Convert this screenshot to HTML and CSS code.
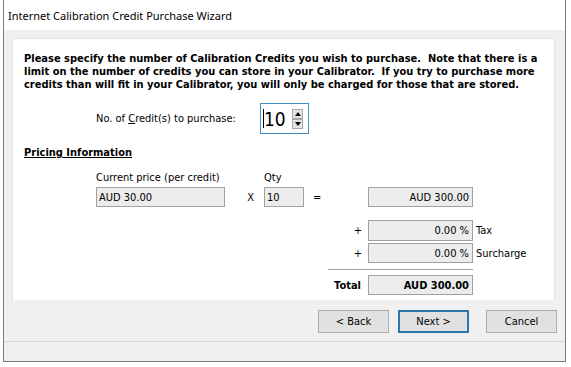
FILE: index.html
```html
<!DOCTYPE html>
<html>
<head>
    <title>Internet Calibration Credit Purchase Wizard</title>
    <link rel="stylesheet" href="styles.css">
</head>
<body>
    <div class="window">
        <div class="titlebar">Internet Calibration Credit Purchase Wizard</div>
        <div class="client">
            <div class="panel">
                <p class="intro">
                    Please specify the number of Calibration Credits you wish to purchase.&nbsp; Note that there is a<br>
                    limit on the number of credits you can store in your Calibrator.&nbsp; If you try to purchase more<br>
                    credits than will fit in your Calibrator, you will only be charged for those that are stored.
                </p>

                <div class="credits-row">
                    <label class="credits-label" for="credits">No. of <u>C</u>redit(s) to purchase:</label>
                    <div class="spinner">
                        <div class="spinner-value"><span class="caret"></span>10</div>
                        <div class="spinner-buttons">
                            <div class="spin-btn"><span class="tri-up"></span></div>
                            <div class="spin-btn"><span class="tri-down"></span></div>
                        </div>
                    </div>
                </div>

                <div class="section-title">Pricing Information</div>

                <div class="pricing">
                    <div class="cell-label c1 r1">Current price (per credit)</div>
                    <div class="cell-label c3 r1">Qty</div>

                    <div class="field c1 r2">AUD 30.00</div>
                    <div class="op op-x c2 r2">X</div>
                    <div class="field c3 r2">10</div>
                    <div class="op op-eq c4 r2">=</div>
                    <div class="field right c5 r2">AUD 300.00</div>

                    <div class="op op-plus c4 r4">+</div>
                    <div class="field right c5 r4">0.00 %</div>
                    <div class="side c6 r4">Tax</div>

                    <div class="op op-plus c4 r6">+</div>
                    <div class="field right c5 r6">0.00 %</div>
                    <div class="side c6 r6">Surcharge</div>

                    <div class="rule r7"></div>

                    <div class="op op-total c4 r8">Total</div>
                    <div class="field right bold c5 r8">AUD 300.00</div>
                </div>
            </div>

            <div class="footer">
                <button class="btn">&lt; Back</button>
                <button class="btn btn-default">Next &gt;</button>
                <button class="btn btn-cancel">Cancel</button>
            </div>
            <div class="statusgap"></div>
        </div>
    </div>
</body>
</html>
```

FILE: styles.css
```css
body {
    margin: 0;
    background-color: #fff;
    font-family: "DejaVu Sans Condensed", "DejaVu Sans", sans-serif;
    font-size: 11px;
    color: #000;
}

.window {
    margin-left: 3px;
    width: 561px;
    border-left: 1px solid #7a7a7a;
    border-right: 1px solid #7a7a7a;
    border-bottom: 1px solid #7a7a7a;
}

.titlebar {
    height: 30px;
    line-height: 31px;
    padding-left: 4px;
    background-color: #fff;
    font-family: "Noto Sans", sans-serif;
    font-size: 11px;
}

.client {
    background-color: #f0f0f0;
    padding-top: 8px;
}

.panel {
    margin: 0 10px 0 8px;
    height: 260px;
    padding: 13px 11px 0 11px;
    box-sizing: border-box;
    height: 262px;
    background-color: #fff;
    border: 1px solid #e2e2e2;
    border-bottom: none;
}

.intro {
    margin: 0;
    font-weight: bold;
    line-height: 13px;
    white-space: nowrap;
}

.credits-row {
    display: flex;
    align-items: center;
    margin: 12px 0 0 72px;
}

.credits-label {
    width: 164px;
}

.spinner {
    display: flex;
    align-items: center;
    width: 49px;
    height: 31px;
    box-sizing: border-box;
    border: 1px solid #3f8fc0;
}

.spinner-value {
    flex: 1;
    display: flex;
    align-items: center;
    padding-left: 2px;
    font-size: 19px;
    line-height: 20px;
}

.caret {
    display: inline-block;
    width: 1px;
    height: 19px;
    background-color: #000;
}

.spinner-buttons {
    display: flex;
    flex-direction: column;
    margin-right: 5px;
}

.spin-btn {
    width: 11px;
    height: 10px;
    box-sizing: border-box;
    border: 1px solid #a9a9a9;
    background-color: #e4e4e4;
    display: flex;
    align-items: center;
    justify-content: center;
}

.tri-up {
    border-left: 3px solid transparent;
    border-right: 3px solid transparent;
    border-bottom: 4px solid #000;
}

.tri-down {
    border-left: 3px solid transparent;
    border-right: 3px solid transparent;
    border-top: 4px solid #000;
}

.section-title {
    margin-top: 12px;
    font-weight: bold;
    line-height: 14px;
    text-decoration: underline;
}

.pricing {
    display: grid;
    grid-template-columns: 129px 39px 40px 64px 105px auto;
    grid-template-rows: 19px 20px 13px 21px 2px 20px 12px 20px;
    margin: 8px 0 0 72px;
}

.c1 { grid-column: 1; }
.c2 { grid-column: 2; }
.c3 { grid-column: 3; }
.c4 { grid-column: 4; }
.c5 { grid-column: 5; }
.c6 { grid-column: 6; }
.r1 { grid-row: 1; }
.r2 { grid-row: 2; }
.r4 { grid-row: 4; }
.r6 { grid-row: 6; }
.r7 { grid-row: 7; }
.r8 { grid-row: 8; }

.cell-label {
    align-self: center;
}

.field {
    box-sizing: border-box;
    border: 1px solid #a0a0a0;
    background-color: #ececec;
    padding: 0 2px;
    display: flex;
    align-items: center;
}

.field.right {
    justify-content: flex-end;
    padding-right: 3px;
}

.bold {
    font-weight: bold;
}

.op {
    align-self: center;
}

.op-x {
    justify-self: end;
    margin-right: 10px;
}

.op-eq {
    margin-left: 9px;
}

.op-plus {
    justify-self: end;
    margin-right: 6px;
}

.op-total {
    justify-self: end;
    margin-right: 7px;
    font-weight: bold;
}

.side {
    align-self: center;
    padding-left: 3px;
}

.rule {
    grid-column: 4 / 6;
    align-self: center;
    margin-left: 24px;
    height: 1px;
    background-color: #a0a0a0;
}

.footer {
    display: flex;
    justify-content: flex-end;
    height: 42px;
    padding: 10px 8px 0 0;
    box-sizing: border-box;
    border-bottom: 1px solid #d4d4d4;
}

.btn {
    width: 71px;
    height: 23px;
    margin: 0;
    padding: 0;
    border: 1px solid #adadad;
    background-color: #e1e1e1;
    font-family: "DejaVu Sans Condensed", "DejaVu Sans", sans-serif;
    font-size: 11px;
    color: #000;
}

.btn-default {
    margin-left: 9px;
    border: 2px solid #2f75aa;
}

.btn-cancel {
    margin-left: 17px;
}

.statusgap {
    height: 19px;
}
```
